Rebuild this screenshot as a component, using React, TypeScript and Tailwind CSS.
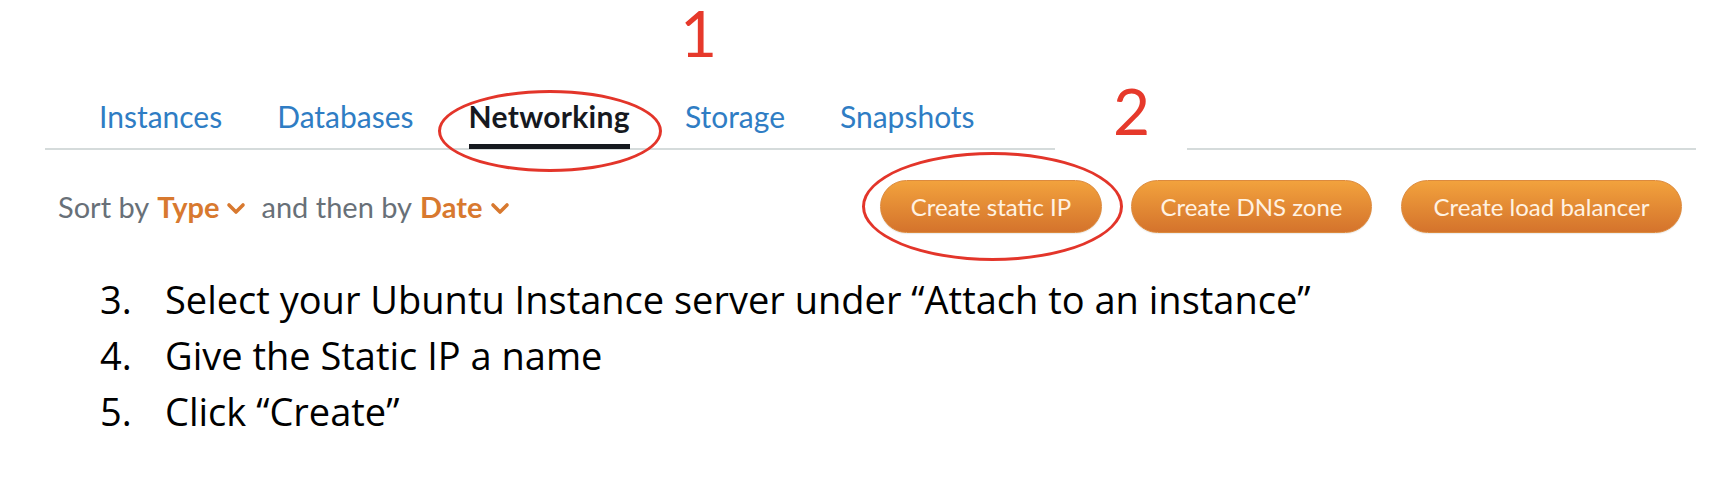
const tabs = [
  { label: 'Instances' },
  { label: 'Databases' },
  { label: 'Networking', active: true },
  { label: 'Storage' },
  { label: 'Snapshots' },
]

const actions = [
  { label: 'Create static IP', width: 'w-[222px]' },
  { label: 'Create DNS zone', width: 'w-[241px]' },
  { label: 'Create load balancer', width: 'w-[281px]' },
]

const steps = [
  { n: '3.', text: 'Select your Ubuntu Instance server under \u201cAttach to an instance\u201d' },
  { n: '4.', text: 'Give the Static IP a name' },
  { n: '5.', text: 'Click \u201cCreate\u201d' },
]

function Chevron() {
  return (
    <svg
      viewBox="0 0 20 13"
      className="mt-[4px] h-[13px] w-[20px]"
      fill="none"
      stroke="currentColor"
      strokeWidth={3.6}
      strokeLinecap="round"
      strokeLinejoin="round"
    >
      <path d="M3 3l7 7 7-7" />
    </svg>
  )
}

export default function App() {
  return (
    <div className="relative h-[494px] w-[1732px] overflow-hidden bg-white font-[Lato,sans-serif]">
      <div className="ml-[45px] w-[1651px] pt-[99px]">
        <nav className="flex items-end gap-[55px] border-b-2 border-[#d5dbdb] pl-[54px]">
          {tabs.map((t) => (
            <div
              key={t.label}
              className={
                t.active
                  ? '-mb-[1px] border-b-[5px] border-[#16191f] pb-[10px] text-[30px] leading-[35px] font-bold tracking-[0.3px] text-[#16191f]'
                  : '-mb-[1px] border-b-[5px] border-transparent pb-[10px] text-[30px] leading-[35px] text-[#2f7dc4]'
              }
            >
              {t.label}
            </div>
          ))}
        </nav>

        <div className="mt-[30px] flex h-[53px] items-center justify-between pr-[14px] pl-[13px]">
          <div className="flex items-center text-[29px] leading-[35px] text-[#687078]">
            <span>Sort by</span>
            <span className="ml-[8px] font-bold text-[#d8792f]">Type</span>
            <span className="ml-[6px] text-[#d8792f]">
              <Chevron />
            </span>
            <span className="ml-[16px]">and then by</span>
            <span className="ml-[8px] font-bold text-[#d8792f]">Date</span>
            <span className="ml-[8px] text-[#d8792f]">
              <Chevron />
            </span>
          </div>
          <div className="flex gap-[29px]">
            {actions.map((a) => (
              <button
                key={a.label}
                className={`${a.width} h-[53px] rounded-full border border-[#dc8a3e] bg-linear-to-b from-[#f2a23d] to-[#d4732c] text-[24px] text-[#fff2e2] shadow-[0_1px_1px_rgba(0,0,0,0.08)]`}
              >
                {a.label}
              </button>
            ))}
          </div>
        </div>
      </div>

      <ol className="mt-[38px] ml-[100px] flex flex-col font-['Open_Sans',sans-serif] text-[38px] leading-[56px] text-black">
        {steps.map((s) => (
          <li key={s.n} className="grid grid-cols-[65px_1fr]">
            <span>{s.n}</span>
            <span>{s.text}</span>
          </li>
        ))}
      </ol>

      {/* annotations laid over the screenshot */}
      <div className="absolute top-[1px] left-[680px] text-[64px] leading-[64px] text-[#e6392b]">1</div>
      <div className="absolute top-[78px] left-[1055px] h-[76px] w-[132px] bg-white pl-[58px] text-[64px] leading-[66px] text-[#e6392b]">
        2
      </div>
      <div className="pointer-events-none absolute top-[90px] left-[438px] h-[82px] w-[224px] rounded-[50%] border-[3px] border-[#e3352a]" />
      <div className="pointer-events-none absolute top-[152px] left-[862px] h-[109px] w-[261px] rounded-[50%] border-[3px] border-[#e3352a]" />
    </div>
  )
}
